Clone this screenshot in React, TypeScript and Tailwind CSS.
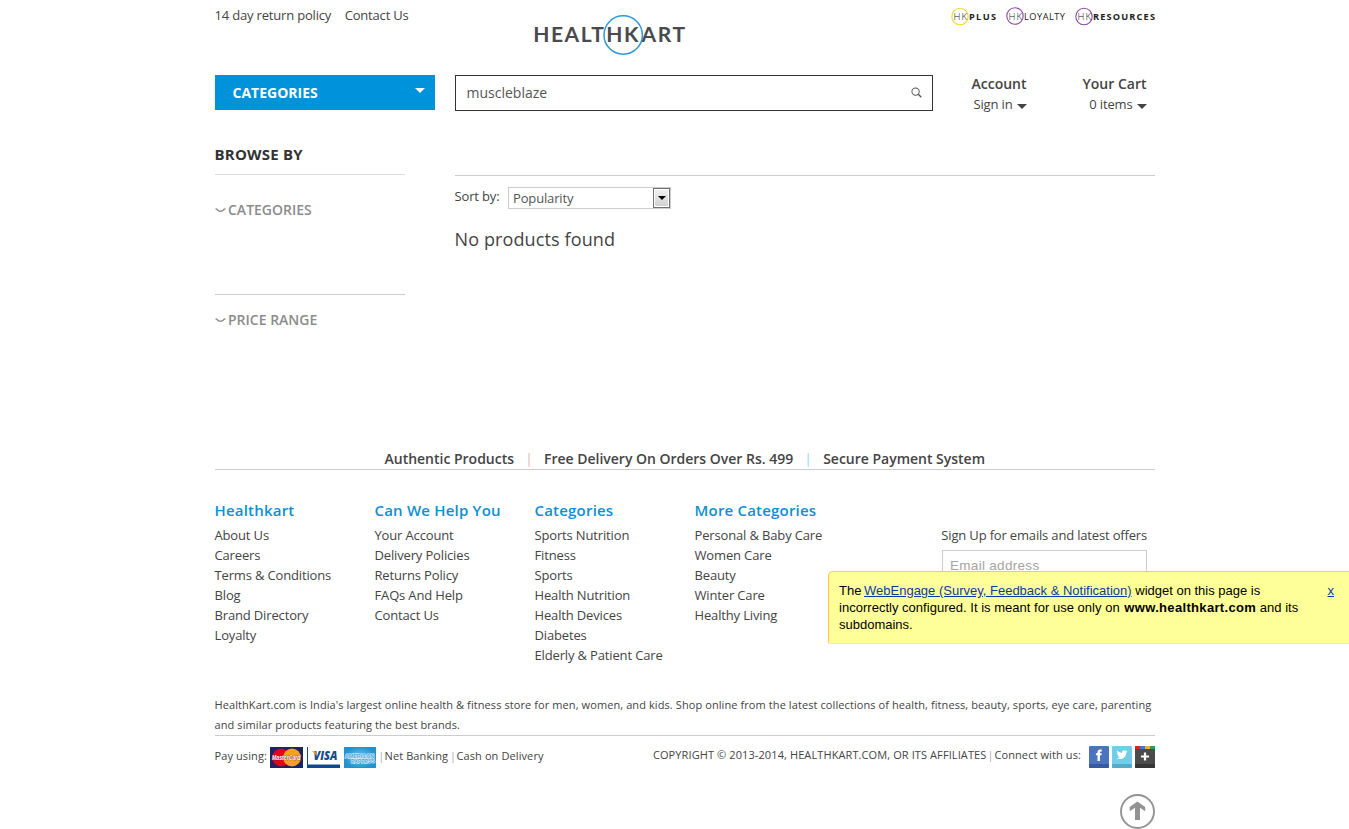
import React from 'react';

type Column = { title: string; links: string[] };

const columns: Column[] = [
  { title: 'Healthkart', links: ['About Us', 'Careers', 'Terms & Conditions', 'Blog', 'Brand Directory', 'Loyalty'] },
  { title: 'Can We Help You', links: ['Your Account', 'Delivery Policies', 'Returns Policy', 'FAQs And Help', 'Contact Us'] },
  { title: 'Categories', links: ['Sports Nutrition', 'Fitness', 'Sports', 'Health Nutrition', 'Health Devices', 'Diabetes', 'Elderly & Patient Care'] },
  { title: 'More Categories', links: ['Personal & Baby Care', 'Women Care', 'Beauty', 'Winter Care', 'Healthy Living'] },
];

function Logo() {
  return (
    <svg className="block h-[42px] w-[152px] tracking-normal" viewBox="0 0 152 42">
      <g fontFamily="Lato, sans-serif" fontSize="21" fontWeight="700" fill="#4a4a4c">
        <text x="-0.700" y="28" textLength="70.500" lengthAdjust="spacing">HEALT</text>
        <text x="72.300" y="28" textLength="32" lengthAdjust="spacing">HK</text>
        <text x="107.500" y="28" textLength="43.500" lengthAdjust="spacing">ART</text>
      </g>
      <circle cx="89.200" cy="21" r="19.200" fill="none" stroke="#2b98dc" strokeWidth="1.500" />
    </svg>
  );
}

function Program({ name, color, width, textWidth, bold, dy }: { name: string; color: string; width: number; textWidth: number; bold: boolean; dy: number }) {
  return (
    <svg className="block shrink-0 tracking-normal" width={width} height="20" viewBox={`0 0 ${width} 20`}>
      <circle cx="9" cy={9.5 + dy} r="8.2" fill="none" stroke={color} strokeWidth="1.1" />
      <text x="2.5" y={13 + dy} fontFamily="Open Sans, sans-serif" fontSize="9.6" fontWeight="300" fill="#222" textLength="13.5">HK</text>
      <text x="18" y={13 + dy} fontFamily="Open Sans, sans-serif" fontSize="9.2" fontWeight={bold ? 700 : 400} fill="#222" textLength={textWidth} lengthAdjust="spacing">{name}</text>
    </svg>
  );
}

function Caret({ className }: { className: string }) {
  return (
    <svg className={className} viewBox="0 0 10 5">
      <path d="M0 0H10L5 5Z" fill="currentColor" />
    </svg>
  );
}

function FilterTitle({ label }: { label: string }) {
  return (
    <div className="flex h-5 items-center text-[14px] font-semibold tracking-normal text-[#8c8c8c]">
      <svg className="mr-[2.5px] h-[5px] w-[11px]" viewBox="0 0 11 5">
        <path d="M.5 .8L1.800 1.200Q3.500 3.300 5.500 3.300T9.200 1.200L10.500 .8" fill="none" stroke="#8c8c8c" strokeWidth="1.400" />
      </svg>
      {label}
    </div>
  );
}

function MasterCard() {
  return (
    <svg className="h-[21px] w-[33px] overflow-visible tracking-normal" viewBox="0 0 33 21">
      <rect width="33" height="21" fill="#1c2464" />
      <circle cx="11.200" cy="10.500" r="9" fill="#e2001a" />
      <circle cx="22" cy="10.500" r="9" fill="#f7a120" />
      <text x="2" y="13.200" fontFamily="Liberation Sans, sans-serif" fontSize="6.500" fontWeight="700" fontStyle="italic" fill="#fff" stroke="#7a1530" strokeWidth=".6" paintOrder="stroke" textLength="28.500" lengthAdjust="spacingAndGlyphs">MasterCard</text>
    </svg>
  );
}

function Visa() {
  return (
    <svg className="h-[21px] w-[33px] overflow-visible tracking-normal" viewBox="0 0 33 21">
      <rect width="33" height="21" fill="#0e4a8c" />
      <rect x="1" y="0" width="32" height="17.500" fill="#fff" />
      <text x="6.500" y="12.800" fontFamily="Open Sans, sans-serif" fontSize="11.500" fontWeight="800" fontStyle="italic" fill="#164a8a" textLength="24" lengthAdjust="spacingAndGlyphs">VISA</text>
      <path d="M4.500 4.200H8.300L9.600 9Q8 5.500 4.500 4.200Z" fill="#f2a900" />
    </svg>
  );
}

function Amex() {
  return (
    <svg className="h-[21px] w-[32px] overflow-visible tracking-normal" viewBox="0 0 32 21">
      <defs>
        <radialGradient id="amex">
          <stop offset="0" stopColor="#7cc9ee" />
          <stop offset="1" stopColor="#2293cf" />
        </radialGradient>
      </defs>
      <rect width="32" height="21" fill="url(#amex)" />
      <g fontFamily="Liberation Sans, sans-serif" fontSize="5" fontWeight="700" fill="#4aa5da" stroke="#e9f6fc" strokeWidth=".8" paintOrder="stroke">
        <text x="0.700" y="11" textLength="29.500" lengthAdjust="spacingAndGlyphs">AMERICAN</text>
        <text x="7" y="15.500" textLength="24" lengthAdjust="spacingAndGlyphs">EXPRESS</text>
      </g>
    </svg>
  );
}

function Socials() {
  return (
    <div className="flex gap-[3px]">
      <svg className="h-[22px] w-[20px]" viewBox="0 0 20 22">
        <rect width="20" height="22" rx="1" fill="#4a74bd" />
        <path d="M0 18H20V21Q20 22 19 22H1Q0 22 0 21Z" fill="#3659a0" />
        <path d="M8.500 15V9.300H6.900V7.300H8.500V6.200Q8.500 3.600 11 3.600H12.800V5.600H11.800Q10.900 5.600 10.900 6.500V7.300H12.800L12.500 9.300H10.900V15Z" fill="#fff" />
      </svg>
      <svg className="h-[22px] w-[20px]" viewBox="0 0 20 22">
        <rect width="20" height="22" rx="1" fill="#73cde8" />
        <path d="M0 18H20V21Q20 22 19 22H1Q0 22 0 21Z" fill="#55acc8" />
        <path transform="translate(4.600 3.200) scale(.45)" fill="#fff" d="M23.950 4.570a10 10 0 0 1-2.820.770 4.960 4.960 0 0 0 2.160-2.720c-.95.560-2 .96-3.130 1.180a4.920 4.920 0 0 0-8.380 4.480C7.690 8.090 4.070 6.130 1.640 3.160a4.920 4.920 0 0 0 1.520 6.570 4.900 4.900 0 0 1-2.230-.61v.06a4.920 4.920 0 0 0 3.950 4.830 5 5 0 0 1-2.210.08 4.940 4.940 0 0 0 4.600 3.420A9.870 9.870 0 0 1 0 19.540a14 14 0 0 0 7.550 2.210c9.050 0 14-7.500 14-13.980v-.64a9.940 9.940 0 0 0 2.460-2.550z" />
      </svg>
      <svg className="h-[22px] w-[20px]" viewBox="0 0 20 22">
        <rect width="20" height="22" rx="1" fill="#4b4b4b" />
        <path d="M0 18H20V21Q20 22 19 22H1Q0 22 0 21Z" fill="#363636" />
        <path d="M0 0H5V3H0Z" fill="#cf2a27" />
        <path d="M5 0H10V3H5Z" fill="#3f78d8" />
        <path d="M10 0H15V3H10Z" fill="#e9b32a" />
        <path d="M15 0H20V3H15Z" fill="#2f9d4c" />
        <path d="M10 6.500V14.500M6 10.500H14" stroke="#fff" strokeWidth="2.200" />
      </svg>
    </div>
  );
}

export default function App() {
  return (
    <div className="relative h-[829px] overflow-hidden bg-white font-['Open_Sans',sans-serif] text-[13px] leading-5 tracking-[-0.15px] text-[#444]">
      <div className="ml-[214.5px] w-[940.5px] whitespace-nowrap">
        <header>
          <div className="flex h-[75px] items-start">
            <div className="flex w-[319.5px] gap-[13.5px] pt-[5px] tracking-[-0.18px]">
              <a>14 day return policy</a>
              <a>Contact Us</a>
            </div>
            <div className="pt-[14px]"><Logo /></div>
            <div className="ml-auto flex pt-[7px]">
              <Program name="PLUS" color="#f8d52c" width={55} textWidth={27} bold dy={0} />
              <Program name="LOYALTY" color="#8c4a9e" width={69} textWidth={41} bold={false} dy={-0.5} />
              <Program name="RESOURCES" color="#8c4a9e" width={80} textWidth={62} bold dy={0} />
            </div>
          </div>
          <div className="flex h-[60px] items-start">
            <div className="flex h-[35px] w-[220px] items-center justify-between bg-[#0092da] pr-[10px] pl-[18px] text-[14px] font-bold tracking-normal text-white">
              <span>CATEGORIES</span>
              <Caret className="mb-[5px] h-[5px] w-[10px]" />
            </div>
            <div className="ml-[20px] flex h-[36px] w-[478px] items-center justify-between border border-[#333] pr-[10px] pl-[11px] text-[14px] tracking-normal text-[#555]">
              <span>muscleblaze</span>
              <svg className="mb-[2px] h-[11px] w-[11px]" viewBox="0 0 12 12" fill="none" stroke="#555">
                <circle cx="5" cy="5" r="4" strokeWidth="1.100" />
                <path d="M8 8L11.200 11.200" strokeWidth="1.500" />
              </svg>
            </div>
            <div className="ml-auto flex gap-[56px] pr-[8.5px] text-right">
              <div>
                <div className="text-[14px] leading-[18px] font-semibold tracking-normal">Account</div>
                <div className="mt-[1px] flex items-center justify-end gap-[4px]">Sign in<Caret className="mt-[4px] h-[5px] w-[10px]" /></div>
              </div>
              <div>
                <div className="text-[14px] leading-[18px] font-semibold tracking-normal">Your Cart</div>
                <div className="mt-[1px] flex items-center justify-end gap-[4px]">0 items<Caret className="mt-[4px] h-[5px] w-[10px]" /></div>
              </div>
            </div>
          </div>
        </header>

        <main className="flex h-[314px]">
          <aside className="w-[190.5px]">
            <div className="h-[40px] border-b border-[#ddd] pt-[9px] text-[15px] font-bold tracking-[0.2px] text-[#333]">BROWSE BY</div>
            <div className="h-[120px] border-b border-[#ccc] pt-[25px]"><FilterTitle label="CATEGORIES" /></div>
            <div className="pt-[15px]"><FilterTitle label="PRICE RANGE" /></div>
          </aside>
          <section className="ml-[49.5px] w-[700.5px]">
            <div className="h-[41px] border-b border-[#ccc]" />
            <div className="flex pt-[11px]">
              <span className="-mt-px w-[53.5px]">Sort by:</span>
              <div className="flex h-[22px] w-[163px] items-center justify-between border border-[#ccc] pl-[4px]">
                <span className="text-[#555]">Popularity</span>
                <span className="flex h-[20px] w-[17px] items-center justify-center border border-[#707070] bg-linear-to-b from-[#f2f2f2] to-[#cfcfcf] text-black shadow-[inset_0_0_0_1px_white]">
                  <Caret className="h-[4px] w-[8px]" />
                </span>
              </div>
            </div>
            <div className="pt-[18px] text-[18px] leading-6 tracking-[0.12px]">No products found</div>
          </section>
        </main>

        <footer>
          <div className="flex h-[21px] justify-center border-b border-[#ccc] text-[14px] font-semibold tracking-[-0.01px]">
            <span>Authentic Products</span>
            <span className="w-[30px] text-center font-light text-[#d08078]">|</span>
            <span>Free Delivery On Orders Over Rs. 499</span>
            <span className="w-[30px] text-center font-light text-[#6cb8ea]">|</span>
            <span>Secure Payment System</span>
          </div>
          <div className="flex h-[225px] pt-[30px]">
            {columns.map((c) => (
              <div key={c.title} className="w-[160px]">
                <h3 className="mb-[5px] text-[15px] font-semibold tracking-[0.2px] text-[#0d8fd2]">{c.title}</h3>
                {c.links.map((l) => <div key={l}>{l}</div>)}
              </div>
            ))}
            <div className="ml-auto pt-[25px] pr-[8px]">
              <div className="tracking-[-0.17px]">Sign Up for emails and latest offers</div>
              <div className="mt-[5px] ml-auto h-[30px] w-[205px] border border-[#ccc] pt-[5px] pl-[7px] font-['Liberation_Sans',sans-serif] text-[13.5px] tracking-[0.3px] text-[#a4a4a4]">Email address</div>
            </div>
          </div>
          <div className="h-[41px] border-b border-[#ccc] text-[11px] tracking-[0.088px]">
            HealthKart.com is India's largest online health &amp; fitness store for men, women, and kids. Shop online from the latest collections of health, fitness, beauty, sports, eye care, parenting<br />
            and similar products featuring the best brands.
          </div>
          <div className="flex h-[58px] items-start pt-[10px] text-[11px] tracking-[0.1px]">
            <div className="flex">
              <span className="w-[55.5px]">Pay using:</span>
              <span className="mt-[1px] flex gap-[4px]"><MasterCard /><Visa /><Amex /></span>
              <span className="ml-[2px] w-[6.5px] text-center font-light text-[#777]">|</span><span className="w-[65px]">Net Banking</span>
              <span className="w-[7px] text-center font-light text-[#777]">|</span><span>Cash on Delivery</span>
            </div>
            <div className="ml-auto flex">
              <span className="-mt-px mr-[8px]">COPYRIGHT © 2013-2014, HEALTHKART.COM, OR ITS AFFILIATES</span>
              <span className="-mt-px -ml-[8px] w-[8px] text-center font-light text-[#777]">|</span>
              <span className="-mt-px mr-[8px]">Connect with us:</span>
              <Socials />
            </div>
          </div>
          <div className="flex justify-end">
            <svg className="h-[35px] w-[35px]" viewBox="0 0 35 35">
              <circle cx="17.500" cy="17.500" r="16.500" fill="none" stroke="#929292" strokeWidth="1.900" />
              <path d="M17.400 7.500L25.200 13V17.300L20 13.800V26H15V13.800L9.700 17.300V13Z" fill="#929292" />
            </svg>
          </div>
        </footer>
      </div>

      <div className="absolute top-[571px] left-[828px] flex h-[72px] w-[521px] justify-between rounded-tl-[5px] border-t border-l border-[#ffc65c] bg-[#ffff99] pt-[10px] pr-[15px] pl-[10px] font-['Liberation_Sans',sans-serif] text-[13px] leading-[17px] tracking-normal whitespace-nowrap text-black shadow-[0_1px_1px_#e4e4e4]">
        <div>
          The <a className="-ml-px text-[#0c3ba0] underline">WebEngage (Survey, Feedback &amp; Notification)</a> widget on this page is<br />
          <span className="tracking-[0.02px]">incorrectly configured. It is meant for use only on <b className="ml-px tracking-[0.33px]">www.healthkart.com</b> and its</span><br />
          subdomains.
        </div>
        <a className="text-[#0c3ba0] underline">x</a>
      </div>
    </div>
  );
}
